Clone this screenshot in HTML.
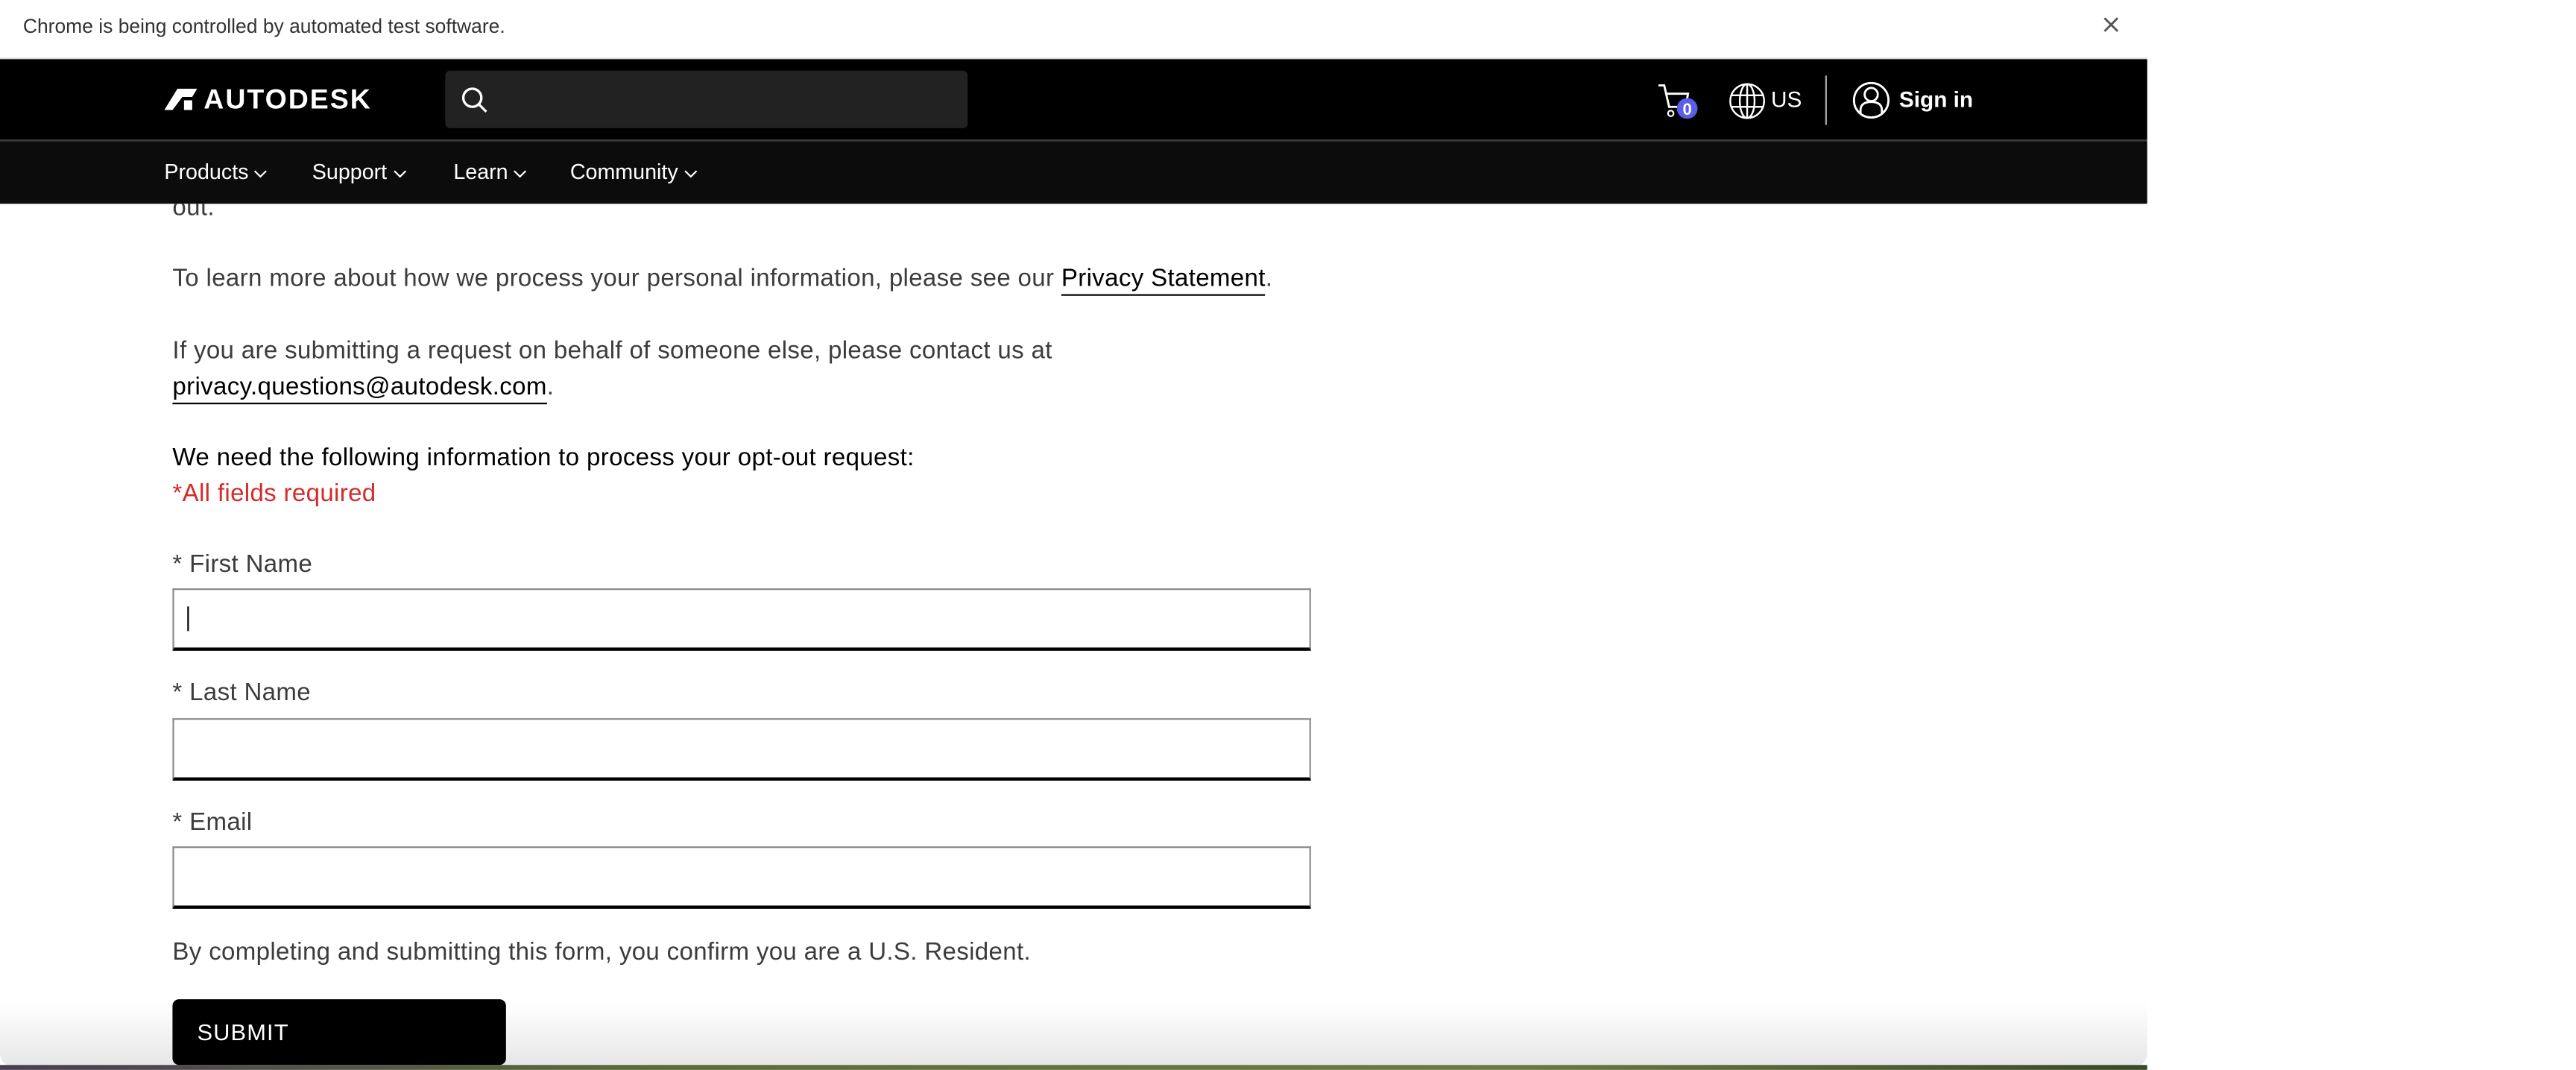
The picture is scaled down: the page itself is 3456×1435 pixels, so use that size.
<!DOCTYPE html>
<html><head><meta charset="utf-8"><style>
html,body{margin:0;padding:0;width:3456px;height:1435px;overflow:hidden;background:#fff}
#w{position:absolute;left:0;top:0;width:1568px;height:651px;transform:scale(2.20408);transform-origin:0 0;font-family:"Liberation Sans",sans-serif;background:#fff}
.a{position:absolute;white-space:nowrap}
.t{font-size:15px;color:#3c3c3c;letter-spacing:0.15px}
.in{position:absolute;left:105px;width:693px;height:38px;border:1px solid #8a8a8a;border-bottom:2px solid #000;box-sizing:border-box;background:#fff}
u{text-decoration:none;border-bottom:1.3px solid #000;color:#000;padding-bottom:1px}
.nav{font-size:13px;color:#fff}
.nav svg{vertical-align:middle;margin-left:3px}
</style></head><body><div id="w">
<div class="a" style="left:14px;top:9px;font-size:12px;color:#333">Chrome is being controlled by automated test software.</div>
<svg class="a" style="left:1280px;top:10px" width="10" height="10"><path d="M1 1L9 9M9 1L1 9" stroke="#555" stroke-width="1.3"/></svg>
<div class="a" style="left:0;top:35px;width:1307px;height:1px;background:#ddd"></div>
<div class="a" style="left:0;top:36px;width:1307px;height:49px;background:#000"></div>
<div class="a" style="left:0;top:85px;width:1307px;height:1px;background:#3a3a3a"></div>
<div class="a" style="left:0;top:86px;width:1307px;height:38px;background:#0c0c0c"></div>
<svg class="a" style="left:100px;top:54px" width="20" height="13"><path d="M0 13L8 0H20L17 5H11L5 13Z M12 7H17V13H12Z" fill="#fff"/></svg>
<div class="a" style="left:124px;top:51px;font-size:17px;font-weight:bold;color:#fff;letter-spacing:0.9px">AUTODESK</div>
<div class="a" style="left:271px;top:43px;width:318px;height:35px;background:#222;border-radius:3px"></div>
<svg class="a" style="left:280px;top:52px" width="18" height="18"><circle cx="7.5" cy="7.5" r="5.5" stroke="#fff" stroke-width="1.5" fill="none"/><path d="M11.5 11.5L16 16" stroke="#fff" stroke-width="1.5"/></svg>
<div class="a nav" style="left:100px;top:97px">Products<svg width="9" height="6"><path d="M1 1L4.5 4.5L8 1" stroke="#fff" fill="none"/></svg></div>
<div class="a nav" style="left:190px;top:97px">Support<svg width="9" height="6"><path d="M1 1L4.5 4.5L8 1" stroke="#fff" fill="none"/></svg></div>
<div class="a nav" style="left:276px;top:97px">Learn<svg width="9" height="6"><path d="M1 1L4.5 4.5L8 1" stroke="#fff" fill="none"/></svg></div>
<div class="a nav" style="left:347px;top:97px">Community<svg width="9" height="6"><path d="M1 1L4.5 4.5L8 1" stroke="#fff" fill="none"/></svg></div>
<svg class="a" style="left:1008px;top:50px" width="30" height="26"><path d="M1.5 2H5L8 15H18L19.5 7H6" stroke="#fff" stroke-width="1.3" fill="none"/><circle cx="9" cy="19" r="1.7" stroke="#fff" fill="none"/><circle cx="19" cy="16" r="6.3" fill="#5b5fe8"/><text x="19" y="19.8" font-size="10" font-weight="bold" fill="#fff" text-anchor="middle" font-family="Liberation Sans">0</text></svg>
<svg class="a" style="left:1052px;top:50px" width="24" height="24"><g stroke="#fff" stroke-width="1.1" fill="none"><circle cx="11.5" cy="11.5" r="10.3"/><ellipse cx="11.5" cy="11.5" rx="4.5" ry="10.3"/><path d="M11.5 1.2V21.8M1.5 8H21.5M1.5 15H21.5"/></g></svg>
<div class="a" style="left:1078px;top:53px;font-size:13.5px;color:#fff">US</div>
<div class="a" style="left:1111px;top:46px;width:1px;height:30px;background:#aaa"></div>
<svg class="a" style="left:1127px;top:49px" width="24" height="24"><g stroke="#fff" stroke-width="1.3" fill="none"><circle cx="12" cy="12" r="10.5"/><circle cx="12" cy="8.5" r="4"/><path d="M5.5 20V18C5.5 14.5 8 13 12 13S18.5 14.5 18.5 18V20"/></g></svg>
<div class="a" style="left:1156px;top:53px;font-size:13.5px;color:#fff;font-weight:bold">Sign in</div>
<div class="a t" style="left:105px;top:118px;clip-path:inset(6px 0 0 0)">out.</div>
<div class="a t" style="left:105px;top:161px">To learn more about how we process your personal information, please see our <u>Privacy Statement</u>.</div>
<div class="a t" style="left:105px;top:205px">If you are submitting a request on behalf of someone else, please contact us at</div>
<div class="a t" style="left:105px;top:227px"><u>privacy.questions@autodesk.com</u>.</div>
<div class="a t" style="left:105px;top:270px;color:#000">We need the following information to process your opt-out request:</div>
<div class="a t" style="left:105px;top:292px;color:#d42b2b">*All fields required</div>
<div class="a t" style="left:105px;top:335px">* First Name</div>
<div class="in" style="top:358px"></div>
<div class="a" style="left:114px;top:369px;width:1px;height:15px;background:#000"></div>
<div class="a t" style="left:105px;top:413px">* Last Name</div>
<div class="in" style="top:437px"></div>
<div class="a t" style="left:105px;top:492px">* Email</div>
<div class="in" style="top:515px"></div>
<div class="a t" style="left:105px;top:571px">By completing and submitting this form, you confirm you are a U.S. Resident.</div>
<div class="a" style="left:0;top:600px;width:1307px;height:49px;background:linear-gradient(#fff,#fff 20%,#e6e6e6);border-radius:0 0 8px 8px"></div>
<div class="a" style="left:105px;top:608px;width:203px;height:40px;background:#000;border-radius:4px"></div>
<div class="a" style="left:120px;top:620px;font-size:14px;color:#fff;letter-spacing:0.5px">SUBMIT</div>
<div class="a" style="left:0;top:648px;width:1307px;height:3px;background:linear-gradient(90deg,#4a3e55,#5b6b3a 30%,#6d7a45 70%,#3a4a2a)"></div>
</div></body></html>
